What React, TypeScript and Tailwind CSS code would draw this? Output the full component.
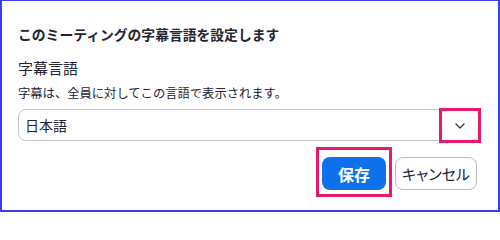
import React from "react";

export default function App() {
  return (
    <div className="w-[500px] h-[212px] bg-white border-[#3c3cf0] border-t border-x-2 border-b-2 pl-[16px] pr-[18px] pt-[23px] flex flex-col font-['Noto_Sans_CJK_JP','Noto_Sans',sans-serif] text-[#232333]">
      <h1 className="text-[13.8px] font-bold leading-[20px]">このミーティングの字幕言語を設定します</h1>
      <div className="mt-[14px] text-[15px] leading-[20px]">字幕言語</div>
      <div className="mt-[7px] text-[12.3px] leading-[16px]">字幕は、全員に対してこの言語で表示されます。</div>
      <div className="relative mt-[8px] h-[32px] rounded-[8px] border border-[#c4c4cc] flex items-center px-[6px] text-[14px] leading-[20px]">
        <span>日本語</span>
        <div className="absolute right-[-2px] top-[-2px] w-[42px] h-[35px] border-[3px] border-[#e8196b] flex items-center justify-center">
          <svg width="10" height="6" viewBox="0 0 10 6" fill="none">
            <path d="M1 1l4 4 4-4" stroke="#3a3a44" strokeWidth="1.4" strokeLinecap="round" strokeLinejoin="round" />
          </svg>
        </div>
      </div>
      <div className="flex justify-end gap-[9px] mt-[16px] pr-[3px]">
        <div className="relative">
          <button className="h-[33px] w-[64px] rounded-[8px] bg-[#0e71eb] text-white font-bold text-[16px] leading-[20px] flex items-center justify-center">保存</button>
          <div className="absolute left-[-6px] right-[-6px] top-[-10px] bottom-[-7px] border-[3px] border-[#e8196b]" />
        </div>
        <button className="h-[33px] w-[82px] rounded-[8px] border border-[#bcbcc4] bg-white text-[15px] leading-[20px] [font-feature-settings:'palt'] flex items-center justify-center">キャンセル</button>
      </div>
    </div>
  );
}
